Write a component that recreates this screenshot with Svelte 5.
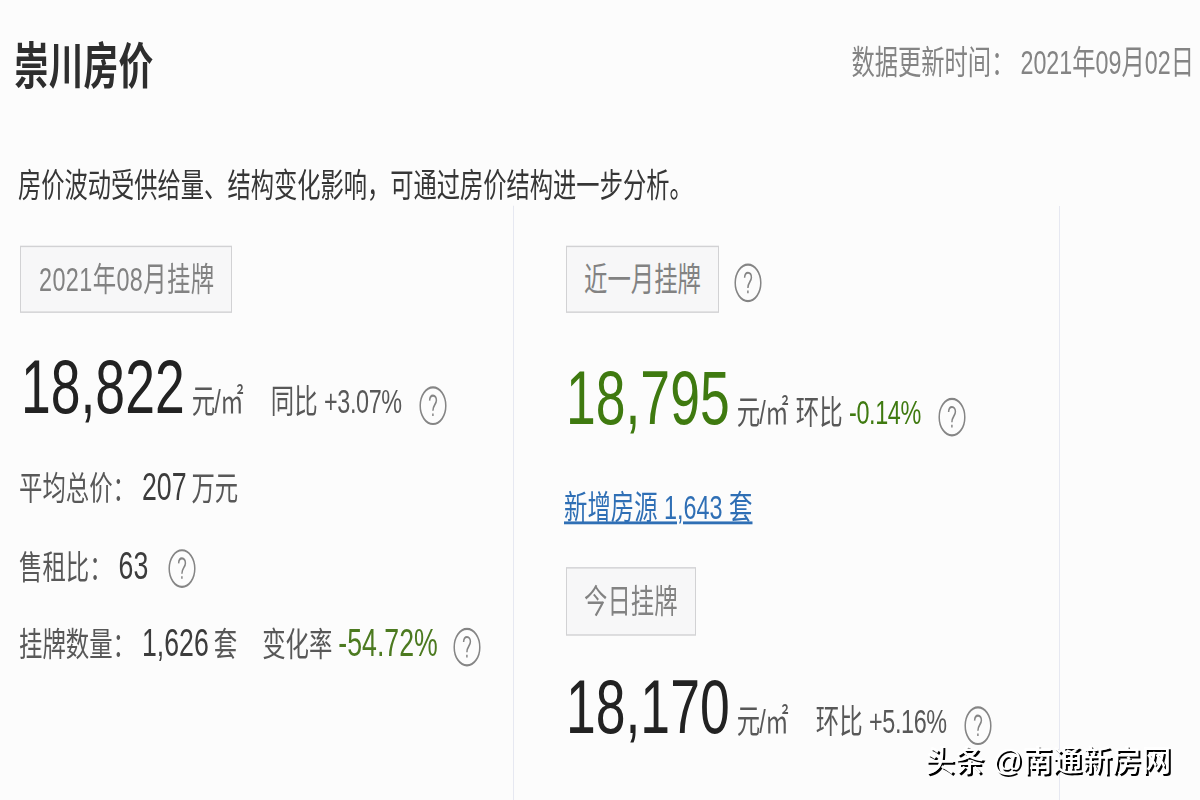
<script lang="ts">
	const district = '崇川';
	const updated = '2021年09月02日';
	const unit = '元/㎡';
</script>

{#snippet help()}
	<svg class="help" viewBox="0 0 28 28" aria-label="说明">
		<circle cx="14" cy="14" r="12.8" />
		<path d="M10.6 10.4 C10.8 7.6 12.4 6.9 14 6.9 C16.2 6.9 17.4 8.4 17.4 10.2 C17.4 13 13.9 13.6 13.9 17.6" />
		<path d="M13.9 19.4 V21.2" />
	</svg>
{/snippet}

<div class="page">
	<div class="stretch">
		<header>
			<h1>{district}房价</h1>
			<span class="updated">数据更新时间：<span class="date">{updated}</span></span>
		</header>
		<p class="intro">房价波动受供给量、结构变化影响，可通过房价结构进一步分析。</p>

		<div class="columns">
			<section class="col first">
				<div class="tag-row"><span class="tag month">2021年08月挂牌</span></div>
				<div class="price-row">
					<span class="price">18,822</span>
					<span class="unit">{unit}</span>
					<span class="change far">同比 <span class="pct">+3.07%</span></span>
					{@render help()}
				</div>
				<div class="row total">
					<span class="label">平均总价：</span>
					<span class="num">207</span>
					<span class="suffix">万元</span>
				</div>
				<div class="row ratio">
					<span class="label">售租比：</span>
					<span class="num">63</span>
					{@render help()}
				</div>
				<div class="row">
					<span class="label">挂牌数量：</span>
					<span class="num">1,626</span>
					<span class="suffix">套</span>
					<span class="rate">变化率</span>
					<span class="num down">-54.72%</span>
					{@render help()}
				</div>
			</section>

			<section class="col second">
				<div class="tag-row">
					<span class="tag">近一月挂牌</span>
					{@render help()}
				</div>
				<div class="price-row low">
					<span class="price green">18,795</span>
					<span class="unit">{unit}</span>
					<span class="change">环比 <span class="pct green">-0.14%</span></span>
					{@render help()}
				</div>
				<a class="link" href="#new">新增房源 1,643 套</a>
				<div class="tag-row"><span class="tag">今日挂牌</span></div>
				<div class="price-row today">
					<span class="price">18,170</span>
					<span class="unit">{unit}</span>
					<span class="change far">环比 <span class="pct">+5.16%</span></span>
					{@render help()}
				</div>
			</section>
		</div>
	</div>

	<div class="watermark">头条 @南通新房网</div>
</div>

<style>
	:global(body) {
		margin: 0;
		background: #fcfcfc;
	}

	.page {
		position: relative;
		width: 1200px;
		height: 800px;
		overflow: hidden;
		background: #fcfcfc;
		color: #585858;
		font-family: 'Liberation Sans', 'Noto Sans CJK SC', sans-serif;
		font-size: 23.4px;
	}

	/* the panel is laid out 560px high and drawn taller than wide */
	.stretch {
		display: flex;
		flex-direction: column;
		height: 560px;
		transform: scaleY(1.42857);
		transform-origin: 0 0;
		white-space: nowrap;
	}

	header {
		display: flex;
		justify-content: space-between;
		height: 94px;
		padding: 0 6px 0 14px;
	}

	h1 {
		margin: 0;
		color: #2e2e2e;
		font-size: 34.8px;
		line-height: 94px;
		font-weight: 700;
	}

	.updated {
		color: #848484;
		font-size: 23.3px;
		line-height: 89px;
	}

	.date {
		margin-left: 6px;
	}

	.intro {
		margin: 0;
		padding: 22.5px 0 0 18px;
		height: 27px;
		line-height: 27px;
		color: #363636;
		font-size: 23.27px;
	}

	.columns {
		display: flex;
		flex: 1;
	}

	.col {
		box-sizing: border-box;
		padding-top: 28px;
		border-right: 1px solid #e6e8f1;
	}

	.first {
		width: 514px;
		padding-left: 20px;
	}

	.second {
		width: 546px;
		padding-left: 52px;
	}

	.tag-row {
		display: flex;
		align-items: center;
		height: 47.6px;
	}

	.tag {
		box-sizing: border-box;
		height: 100%;
		padding: 0 17px;
		border: 1px solid #d2d2d4;
		background: #f7f7f8;
		color: #828282;
		line-height: 47px;
	}

	.month {
		padding: 0 16px 0 18px;
		letter-spacing: 0.4px;
	}

	.help {
		flex: none;
		align-self: center;
		width: 28px;
		height: 28px;
		margin: 5px 0 0 15px;
		fill: none;
		stroke: #858585;
		stroke-width: 1.5;
	}

	.price-row {
		display: flex;
		align-items: baseline;
		height: 60px;
		margin-top: 22px;
		line-height: 60px;
	}

	.price-row .help {
		margin: 26px 0 0 17px;
	}

	.low {
		margin-top: 30px;
	}

	.today {
		margin-top: 20.5px;
	}

	.price {
		margin-left: 1px;
		color: #222;
		font-size: 53.5px;
	}

	.second .price {
		margin-left: 0;
	}

	.unit {
		margin-left: 7px;
		letter-spacing: -0.7px;
	}

	.change {
		margin-left: 8px;
	}

	.far {
		margin-left: 28px;
	}

	.pct {
		letter-spacing: -0.4px;
	}

	.green {
		color: #3f7a10;
	}

	.row {
		display: flex;
		align-items: baseline;
		height: 54.6px;
		margin-left: -1px;
		line-height: 54.6px;
	}

	.total {
		margin-top: 13px;
	}

	.ratio .help {
		margin-left: 20px;
	}

	.num {
		margin-left: 6px;
		color: #3c3c3c;
		font-size: 26.7px;
	}

	.suffix {
		margin-left: 5px;
	}

	.rate {
		margin-left: 25px;
	}

	.down {
		color: #4c7a20;
	}

	.link {
		display: block;
		width: max-content;
		margin: 28px 0 24px -2px;
		color: #2f6fb5;
		line-height: 36px;
		text-decoration: underline;
	}

	.watermark {
		position: absolute;
		left: 925px;
		top: 739px;
		color: #fff;
		font-size: 29.7px;
		font-weight: 500;
		line-height: 44px;
		white-space: nowrap;
		text-shadow: 2px 2px 0 #000;
	}
</style>
